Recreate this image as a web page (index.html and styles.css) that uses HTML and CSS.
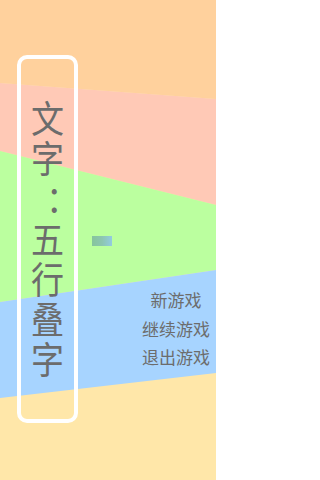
FILE: index.html
```html
<!DOCTYPE html>
<html lang="zh">
<head>
<meta charset="utf-8">
<title>文字：五行叠字</title>
<link rel="stylesheet" href="styles.css">
</head>
<body>
<div class="screen">
  <svg class="bg" viewBox="0 0 216 480" width="216" height="480" preserveAspectRatio="none" aria-hidden="true">
    <rect x="0" y="0" width="216" height="480" fill="#FFE7A9"/>
    <polygon points="0,0 216,0 216,99 0,83" fill="#FFD19D"/>
    <polygon points="0,83 216,99 216,205 0,151" fill="#FFC9B6"/>
    <polygon points="0,151 216,205 216,270 0,302" fill="#BBFF9F"/>
    <polygon points="0,302 216,270 216,373 0,398" fill="#A7D4FF"/>
  </svg>
  <div class="layout">
    <div class="title-box">
      <div class="title">
        <span class="ch">文</span>
        <span class="ch">字</span>
        <span class="ch colon">：</span>
        <span class="ch">五</span>
        <span class="ch">行</span>
        <span class="ch">叠</span>
        <span class="ch">字</span>
      </div>
    </div>
    <div class="middle">
      <div class="chip"></div>
    </div>
    <nav class="menu">
      <div class="item">新游戏</div>
      <div class="item">继续游戏</div>
      <div class="item">退出游戏</div>
    </nav>
  </div>
</div>
</body>
</html>
```
FILE: styles.css
```css
html, body {
  margin: 0;
  padding: 0;
}
body {
  width: 216px;
  height: 480px;
  overflow: hidden;
  font-family: "Noto Sans CJK SC", "Noto Sans", sans-serif;
  color: #6c6c6c;
}
.screen {
  position: relative;
  width: 216px;
  height: 480px;
}
.bg {
  position: absolute;
  left: 0;
  top: 0;
  display: block;
}
.layout {
  position: relative;
  display: flex;
  flex-direction: row;
  padding: 55px 0 0 17px;
  height: 480px;
  box-sizing: border-box;
}
.title-box {
  width: 61px;
  height: 368px;
  box-sizing: border-box;
  border: 4px solid #ffffff;
  border-radius: 10px;
  flex: none;
}
.title {
  display: flex;
  flex-direction: column;
  align-items: center;
  padding-top: 38px;
}
.ch {
  display: block;
  font-size: 33px;
  line-height: 40.2px;
  height: 40.2px;
  transform: scaleY(1.12);
}
.colon {
  transform: translateX(15px) scaleY(1.12);
}
.middle {
  width: 58px;
  flex: none;
  padding: 181px 0 0 14px;
  box-sizing: border-box;
}
.chip {
  width: 20px;
  height: 10px;
  background: linear-gradient(90deg, #86c49c 0%, #8cc6b0 50%, #93cbe0 100%);
}
.menu {
  flex: 1;
  display: flex;
  flex-direction: column;
  align-items: center;
  padding-top: 231px;
}
.item {
  font-size: 17px;
  line-height: 28.5px;
  white-space: nowrap;
}
```
